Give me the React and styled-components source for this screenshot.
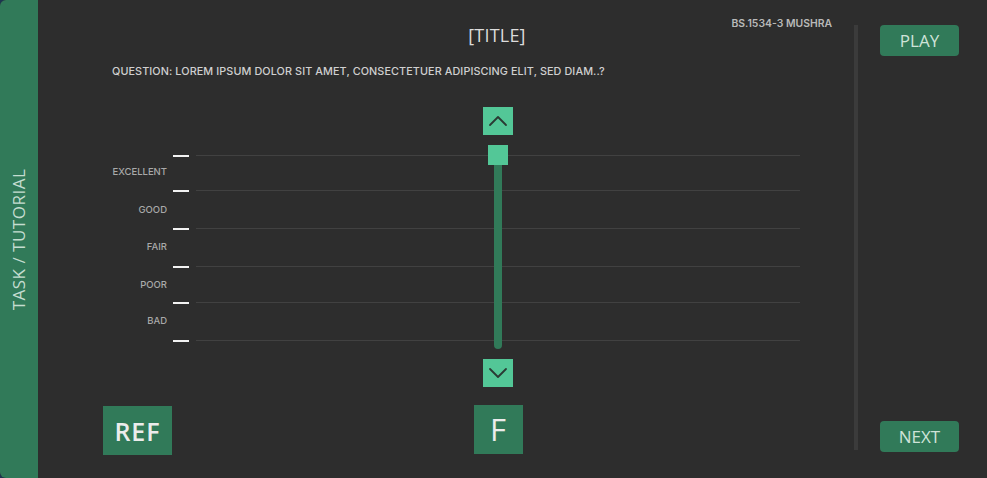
import React from "react";
import styled, { createGlobalStyle } from "styled-components";

const Global = createGlobalStyle`
  html, body { margin: 0; padding: 0; background: #1d3550; }
  body { font-family: "Open Sans", "Liberation Sans", sans-serif; }
  * { box-sizing: border-box; }
`;

const Window = styled.div`
  display: flex;
  width: 987px;
  height: 478px;
  background: #2d2d2d;
  border-radius: 6px 0 0 6px;
  overflow: hidden;
`;

const Sidebar = styled.div`
  width: 38px;
  flex: none;
  background: #317a59;
  display: flex;
  align-items: center;
  justify-content: center;
`;

const SideLabel = styled.span`
  transform: rotate(-90deg);
  white-space: nowrap;
  font-family: "Open Sans", sans-serif;
  font-size: 17px;
  color: #c4ddd0;
  letter-spacing: 0.5px;
`;

const Content = styled.div`
  flex: 1;
  display: grid;
  grid-template-columns: 816px 4px 1fr;
`;

const Main = styled.div`
  display: flex;
  flex-direction: column;
  padding-left: 65px;
`;

const Header = styled.div`
  display: grid;
  grid-template-columns: 1fr auto 1fr;
  margin-left: 37px;
  padding-top: 23px;
  height: 52px;
`;

const Title = styled.h1`
  grid-column: 2;
  margin: 0;
  font-family: "Open Sans", sans-serif;
  font-weight: 400;
  font-size: 18px;
  line-height: 24px;
  color: #dcdcdc;
  letter-spacing: 0.2px;
`;

const Standard = styled.div`
  grid-column: 3;
  justify-self: end;
  margin-top: -5px;
  padding-right: 22px;
  font-family: Inter, sans-serif;
  font-weight: 600;
  font-size: 10.4px;
  color: #b9b9b9;
  line-height: 12px;
`;

const Question = styled.p`
  margin: 13px 0 0 9px;
  font-family: Inter, sans-serif;
  font-weight: 500;
  font-size: 10.8px;
  line-height: 14px;
  color: #d0d0d0;
  letter-spacing: 0.1px;
`;

const Chart = styled.div`
  margin-top: 28px;
  display: grid;
  grid-template-columns: 64px 6px 16px 7px 604px;
  grid-template-rows: 48px 1px 34px 1px 37px 1px 37px 1px 35px 1px 37px 1px 46px 18px 49px;
`;

const Tick = styled.div`
  grid-column: 3;
  grid-row: ${(p) => p.$row};
  height: 2px;
  align-self: center;
  background: #f2f2f2;
`;

const Rule = styled.div`
  grid-column: 5;
  grid-row: ${(p) => p.$row};
  height: 1px;
  background: #414141;
`;

const Label = styled.div`
  grid-column: 1;
  grid-row: ${(p) => p.$row};
  align-self: center;
  justify-self: end;
  margin-top: ${(p) => p.$shift || 0}px;
  font-family: Inter, sans-serif;
  font-weight: 500;
  font-size: 9.5px;
  color: #a9a9a9;
`;

const Slider = styled.div`
  grid-column: 5;
  grid-row: 1 / 14;
  justify-self: center;
  margin-left: -1px;
  display: flex;
  flex-direction: column;
  align-items: center;
  z-index: 1;
`;

const ArrowButton = styled.button`
  width: 30px;
  height: 28px;
  flex: none;
  border: none;
  padding: 0;
  background: #53c797;
  display: flex;
  align-items: center;
  justify-content: center;
  cursor: pointer;
`;

const TrackWrap = styled.div`
  flex: 1;
  margin: 10px 0;
  display: flex;
  flex-direction: column;
  align-items: center;
`;

const Thumb = styled.div`
  width: 20px;
  height: 20px;
  background: #53c797;
  flex: none;
`;

const Track = styled.div`
  width: 8px;
  flex: 1;
  background: #317a59;
  border-radius: 0 0 4px 4px;
`;

const RefButton = styled.button`
  grid-column: 1 / 5;
  grid-row: 15;
  justify-self: start;
  margin-top: 1px;
  width: 69px;
  height: 49px;
  border: none;
  background: #317a59;
  color: #ececec;
  font-family: "Open Sans", sans-serif;
  font-weight: 600;
  font-size: 25px;
  letter-spacing: 1px;
  padding: 0;
`;

const StimButton = styled.button`
  grid-column: 5;
  grid-row: 15;
  justify-self: center;
  width: 49px;
  height: 49px;
  border: none;
  background: #317a59;
  color: #ececec;
  font-family: "Open Sans", sans-serif;
  font-weight: 400;
  font-size: 31px;
  line-height: 1;
  padding: 0;
`;

const Divider = styled.div`
  margin: 25px 0 28px;
  background: #3b3b3b;
`;

const Side = styled.div`
  display: flex;
  flex-direction: column;
  justify-content: space-between;
  padding: 25px 0 26px 22px;
`;

const ActionButton = styled.button`
  width: 79px;
  height: 31px;
  border: none;
  border-radius: 4px;
  background: #317a59;
  color: #cfe3d8;
  font-family: "Open Sans", sans-serif;
  font-size: 17px;
  padding: 0;
`;

const Chevron = ({ up }) => (
  <svg width="20" height="12" viewBox="0 0 20 12" fill="none">
    <path
      d={up ? "M2 10 L10 2 L18 10" : "M2 2 L10 10 L18 2"}
      stroke="#2a3a33"
      strokeWidth="1.8"
      strokeLinecap="round"
      strokeLinejoin="round"
    />
  </svg>
);

const labels = [
  { text: "EXCELLENT", row: 3, shift: -4 },
  { text: "GOOD", row: 5, shift: 0 },
  { text: "FAIR", row: 7, shift: -3 },
  { text: "POOR", row: 9, shift: 0 },
  { text: "BAD", row: 11, shift: -3 },
];

const lineRows = [2, 4, 6, 8, 10, 12];

export default function App() {
  return (
    <>
      <Global />
      <Window>
        <Sidebar>
          <SideLabel>TASK / TUTORIAL</SideLabel>
        </Sidebar>
        <Content>
          <Main>
            <Header>
              <Title>[TITLE]</Title>
              <Standard>BS.1534-3 MUSHRA</Standard>
            </Header>
            <Question>
              QUESTION: LOREM IPSUM DOLOR SIT AMET, CONSECTETUER ADIPISCING ELIT, SED DIAM..?
            </Question>
            <Chart>
              {lineRows.map((r) => (
                <React.Fragment key={r}>
                  <Tick $row={r} />
                  <Rule $row={r} />
                </React.Fragment>
              ))}
              {labels.map((l) => (
                <Label key={l.text} $row={l.row} $shift={l.shift}>
                  {l.text}
                </Label>
              ))}
              <Slider>
                <ArrowButton aria-label="up">
                  <Chevron up />
                </ArrowButton>
                <TrackWrap>
                  <Thumb />
                  <Track />
                </TrackWrap>
                <ArrowButton aria-label="down">
                  <Chevron />
                </ArrowButton>
              </Slider>
              <RefButton>REF</RefButton>
              <StimButton>F</StimButton>
            </Chart>
          </Main>
          <Divider />
          <Side>
            <ActionButton>PLAY</ActionButton>
            <ActionButton>NEXT</ActionButton>
          </Side>
        </Content>
      </Window>
    </>
  );
}
